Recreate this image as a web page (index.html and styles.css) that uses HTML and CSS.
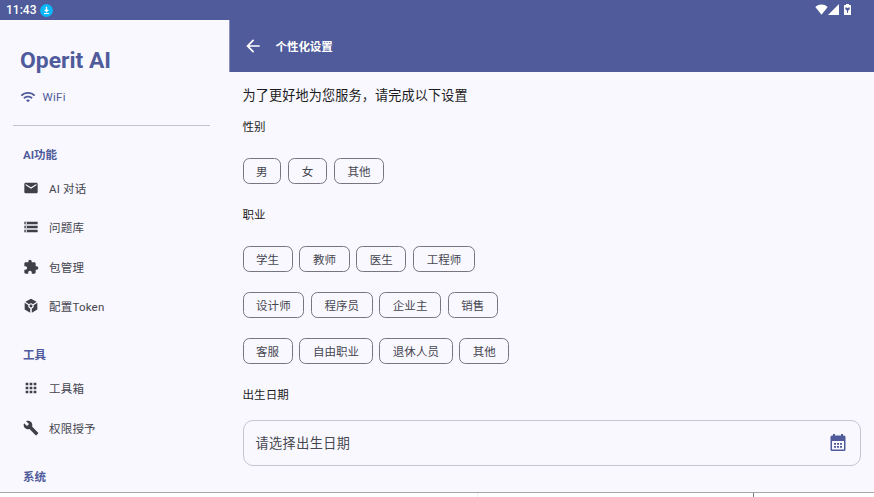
FILE: index.html
```html
<!DOCTYPE html>
<html lang="zh-CN">
<head>
    <meta charset="utf-8">
    <title>Operit AI</title>
    <link rel="stylesheet" href="styles.css">
</head>
<body>
    <div class="status-bar">
        <span class="time">11:43</span>
        <svg class="download" viewBox="0 0 13 13"><circle cx="6.5" cy="6.5" r="6.4" fill="#08b8fb"/><path d="M5.8 2.8h1.4v3h1.900L6.500 8.400 3.900 5.800h1.900zM4 9.100h5v1H4z" fill="#fff"/></svg>
        <div class="status-icons">
            <svg class="signal-wifi" viewBox="0 0 13 11"><path d="M6.500 10.700.3 2.900C3.900-.4 9.100-.4 12.700 2.900z"/></svg>
            <svg class="signal-cell" viewBox="0 0 11 11"><path d="M0 11 11 0v11z"/></svg>
            <svg class="battery" viewBox="0 0 7 11"><path d="M2 0h3v1h1.400q.6 0 .6.600v8.800q0 .6-.6.600H.6q-.6 0-.6-.6V1.600q0-.6.6-.6H2z"/><path d="M1.300 3.500h1L3.500 4l1.200-.5h1v1.800L4.200 6.500 3.800 9h-.8V6.500L1.300 5.300z" class="bolt"/></svg>
        </div>
    </div>

    <div class="app">
        <aside class="sidebar">
            <h1>Operit AI</h1>
            <div class="network">
                <svg viewBox="0 0 24 24"><path d="M1 9l2 2c4.970-4.970 13.030-4.970 18 0l2-2C16.930 2.930 7.080 2.930 1 9zm8 8l3 3 3-3c-1.650-1.660-4.340-1.660-6 0zm-4-4l2 2c2.760-2.760 7.240-2.760 10 0l2-2C15.140 9.140 8.870 9.140 5 13z"/></svg>
                <span>WiFi</span>
            </div>
            <hr>
            <h2>AI功能</h2>
            <a class="nav-item">
                <svg viewBox="0 0 24 24"><path d="M20 4H4c-1.100 0-2 .9-2 2v12c0 1.100.9 2 2 2h16c1.100 0 2-.9 2-2V6c0-1.100-.9-2-2-2zm0 4l-8 5-8-5V6l8 5 8-5v2z"/></svg>
                <span>AI 对话</span>
            </a>
            <a class="nav-item">
                <svg viewBox="0 0 24 24"><path d="M2 20h20v-4H2v4zm2-3h2v2H4v-2zM2 4v4h20V4H2zm4 3H4V5h2v2zm-4 7h20v-4H2v4zm2-3h2v2H4v-2z"/></svg>
                <span>问题库</span>
            </a>
            <a class="nav-item">
                <svg viewBox="0 0 24 24"><path d="M20.500 11H19V7c0-1.100-.9-2-2-2h-4V3.500a2.500 2.500 0 0 0-5 0V5H4c-1.100 0-2 .9-2 2v3.800h1.500a2.700 2.700 0 0 1 0 5.400H2V20c0 1.100.9 2 2 2h3.800v-1.500a2.700 2.700 0 0 1 5.400 0V22H17c1.100 0 2-.9 2-2v-4h1.500a2.500 2.500 0 0 0 0-5z"/></svg>
                <span>包管理</span>
            </a>
            <a class="nav-item">
                <svg viewBox="0 0 24 24"><path d="M21.500 7v10.200l-8.300 4.800v-6.200a4 4 0 0 0 2.700-4.900zM2.500 7l5.600 3.900a4 4 0 0 0 2.700 4.900V22l-8.300-4.800zM12 1.200l8.500 4.500-5.600 3.600a4 4 0 0 0-5.800 0L3.500 5.700z"/><circle cx="12" cy="12" r="2.200"/></svg>
                <span>配置Token</span>
            </a>
            <h2>工具</h2>
            <a class="nav-item">
                <svg viewBox="0 0 24 24"><path d="M4 8h4V4H4v4zm6 12h4v-4h-4v4zm-6 0h4v-4H4v4zm0-6h4v-4H4v4zm6 0h4v-4h-4v4zm6-10v4h4V4h-4zm-6 4h4V4h-4v4zm6 6h4v-4h-4v4zm0 6h4v-4h-4v4z"/></svg>
                <span>工具箱</span>
            </a>
            <a class="nav-item">
                <svg viewBox="0 0 24 24"><path d="M22.700 19l-9.100-9.100c.9-2.300.4-5-1.500-6.900-2-2-5-2.400-7.400-1.300L9 6 6 9 1.600 4.700C.4 7.100.9 10.100 2.900 12.100c1.900 1.900 4.600 2.400 6.900 1.500l9.100 9.100c.4.4 1 .4 1.400 0l2.300-2.300c.5-.4.5-1.100.1-1.400z"/></svg>
                <span>权限授予</span>
            </a>
            <h2>系统</h2>
        </aside>

        <main>
            <header>
                <svg viewBox="0 0 24 24"><path d="M20 11H7.830l5.590-5.590L12 4l-8 8 8 8 1.410-1.410L7.830 13H20v-2z"/></svg>
                <span>个性化设置</span>
            </header>
            <div class="content">
                <p class="intro">为了更好地为您服务，请完成以下设置</p>
                <h3>性别</h3>
                <div class="chips">
                    <button>男</button>
                    <button>女</button>
                    <button>其他</button>
                </div>
                <h3>职业</h3>
                <div class="chips">
                    <button>学生</button>
                    <button>教师</button>
                    <button>医生</button>
                    <button>工程师</button>
                </div>
                <div class="chips">
                    <button>设计师</button>
                    <button>程序员</button>
                    <button>企业主</button>
                    <button>销售</button>
                </div>
                <div class="chips">
                    <button>客服</button>
                    <button>自由职业</button>
                    <button>退休人员</button>
                    <button>其他</button>
                </div>
                <h3>出生日期</h3>
                <div class="date-field">
                    <span>请选择出生日期</span>
                    <svg viewBox="0 0 16 17"><path fill-rule="evenodd" d="M3 0h2v1.500h6V0h2v1.500h1q1.500 0 1.500 1.500v12.500q0 1.500-1.500 1.500H2q-1.500 0-1.500-1.500V3q0-1.500 1.500-1.500h1zM2 7v8.500h12V7z"/><path d="M4 9h2v1.700H4zM7 9h2v1.700H7zM10 9h2v1.700h-2zM4 12h2v1.700H4zM7 12h2v1.700H7zM10 12h2v1.700h-2z"/></svg>
                </div>
            </div>
        </main>
    </div>

    <div class="bottom-edge"><i></i><i></i></div>
</body>
</html>
```
FILE: styles.css
```css
* {
    box-sizing: border-box;
}

body {
    margin: 0;
    width: 874px;
    height: 497px;
    overflow: hidden;
    display: flex;
    flex-direction: column;
    background: #f9f8ff;
    color: #1b1b21;
    font-family: Roboto, "Noto Sans CJK SC", sans-serif;
    font-size: 11.5px;
}

svg {
    display: block;
    flex: none;
    fill: currentColor;
}

h1, h2, h3, p {
    margin: 0;
}

.status-bar {
    flex: none;
    display: flex;
    align-items: center;
    height: 20px;
    padding: 0 22px 0 6px;
    background: #4f5b9a;
    color: #fff;
}

.time {
    width: 34px;
    font-size: 12px;
    font-weight: 500;
}

.download {
    width: 13px;
    height: 13px;
}

.status-icons {
    display: flex;
    align-items: center;
    align-self: flex-start;
    height: 19px;
    margin-left: auto;
}

.signal-wifi {
    width: 13px;
    height: 11px;
}

.signal-cell {
    width: 11px;
    height: 11px;
}

.battery {
    width: 7px;
    height: 11px;
    margin-left: 5px;
    margin-right: 1px;
}

.bolt {
    fill: #4f5b9a;
}

.app {
    display: flex;
    height: 472px;
    overflow: hidden;
}

.sidebar {
    flex: none;
    width: 229px;
    padding: 24px 19px 0 13px;
}

.sidebar h1 {
    padding-left: 7px;
    color: #4f5b9a;
    font-size: 22.9px;
    font-weight: 700;
    line-height: 33px;
}

.network {
    display: flex;
    align-items: center;
    gap: 6.5px;
    height: 26px;
    margin-top: 7px;
    padding-left: 7px;
    color: #4f5b9a;
    letter-spacing: 0.3px;
}

.network svg {
    width: 16px;
    height: 16px;
}

.sidebar hr {
    height: 1px;
    margin: 15px 0 18px;
    border: 0;
    background: #c3c2cc;
}

.sidebar h2 {
    height: 22px;
    padding-left: 10px;
    color: #4f5b9a;
    font-size: 11.5px;
    font-weight: 700;
    line-height: 22px;
}

.nav-item {
    display: flex;
    align-items: center;
    gap: 10px;
    height: 39.3px;
    padding-left: 10px;
    color: #46464f;
    letter-spacing: 0.2px;
}

.nav-item svg {
    width: 16px;
    height: 16px;
    color: #3f3f48;
}

.sidebar h2 + .nav-item {
    margin-top: 2.5px;
}

.nav-item + h2 {
    margin-top: 18.6px;
}

main {
    flex: 1;
}

header {
    display: flex;
    align-items: center;
    gap: 13px;
    height: 52px;
    padding-left: 12.5px;
    border-left: 1px solid #8991bb;
    background: #4f5b9a;
    color: #fff;
    font-weight: 700;
    letter-spacing: -0.05px;
}

header svg {
    width: 20px;
    height: 20px;
}

.content {
    padding: 13px 13px 0 13.5px;
}

.intro {
    font-size: 13.1px;
    line-height: 21px;
    letter-spacing: 0.15px;
}

.content h3 {
    font-size: 11.5px;
    font-weight: 400;
    line-height: 16px;
    letter-spacing: 0.08px;
}

.intro + h3 {
    margin-top: 12.5px;
}

.chips {
    display: flex;
    gap: 6.6px;
    height: 26px;
    margin-top: 20px;
}

h3 + .chips {
    margin-top: 23.3px;
}

.chips + h3 {
    margin-top: 22.9px;
}

.chips button {
    height: 26px;
    padding: 0 12.6px;
    border: 1px solid #777680;
    border-radius: 6.5px;
    background: none;
    color: #46464f;
    font: inherit;
    letter-spacing: 0.03px;
}

/* gender row has the single character chips */
.intro + h3 + .chips {
    gap: 7px;
}

.date-field {
    display: flex;
    align-items: center;
    justify-content: space-between;
    height: 45.5px;
    margin-top: 17.3px;
    padding: 0 14px 0 12px;
    border: 1px solid #c6c5d0;
    border-radius: 10px;
    color: #46464f;
    font-size: 13.1px;
    letter-spacing: 0.45px;
}

.date-field svg {
    width: 16px;
    height: 17px;
    color: #4f5b9a;
}

.bottom-edge {
    flex: none;
    display: flex;
    height: 5px;
    border-top: 1px solid #a5a5ab;
    background: #fff;
}

.bottom-edge i {
    width: 478px;
    border-right: 1px solid #ececf0;
}

.bottom-edge i + i {
    width: 276px;
    border-right-color: #77777c;
}
```
